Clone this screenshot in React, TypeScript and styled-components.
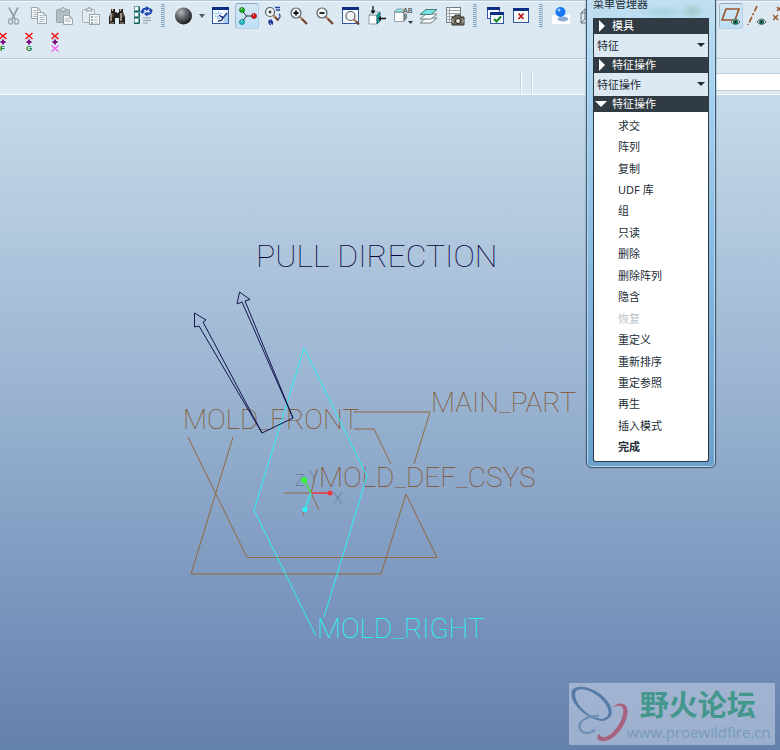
import React from "react";
import styled, { createGlobalStyle, css } from "styled-components";

const GlobalStyle = createGlobalStyle`
  * { box-sizing: border-box; }
  body {
    margin: 0;
    font-family: "Noto Sans", "Noto Sans CJK SC", sans-serif;
    font-size: 11px;
    color: #222c34;
  }
  button, select, input { font: inherit; color: inherit; }
`;

const Page = styled.div`
  position: relative;
  display: flex;
  flex-direction: column;
  min-height: 100vh;
  overflow: hidden;
`;

const Header = styled.header`
  background: #dce9f3;
  border-top: 1px solid #b4c9dc;
  border-bottom: 1px solid #f6fafd;
  overflow: hidden;
`;

const Toolbar = styled.div`
  display: flex;
  align-items: center;
  height: 29px;
  border-top: 1px solid #eff5fa;
`;

const FlagBar = styled.div`
  display: flex;
  align-items: center;
  height: 28px;
  margin-left: -10px;
  padding-bottom: 5px;
`;

const ToolButton = styled.button<{ $active?: boolean }>`
  display: flex;
  flex: none;
  align-items: center;
  justify-content: center;
  width: 26px;
  height: 26px;
  padding: 0;
  border: 1px solid transparent;
  border-radius: 3px;
  background: none;
  background-clip: padding-box;
  ${(p) =>
    p.$active &&
    css`
      width: 24px;
      margin: 0 1px;
      border-color: #8fa9bf #b4d0e6 #b4d0e6 #9fb8cc;
      background: linear-gradient(#d3e6f4, #bfe0f7);
    `}
`;

const MoreButton = styled.button`
  display: flex;
  flex: none;
  width: 12px;
  height: 24px;
  align-items: center;
  justify-content: center;
  padding: 0;
  border: 0;
  background: none;
`;

const Divider = styled.div`
  flex: none;
  width: 14px;
  height: 24px;
  display: flex;
  justify-content: center;
  &::before {
    content: "";
    width: 3px;
    background: repeating-linear-gradient(#7d9fbd 0 1px, #dce9f3 1px 2px);
    border-right: 1px solid #b8cddd;
  }
`;

const DatumGroup = styled.div`
  display: flex;
  flex: none;
  margin-left: 118px;
`;

const InfoBar = styled.div`
  display: flex;
  justify-content: flex-end;
  align-items: flex-end;
  height: 36px;
  border-top: 1px solid #b4c9dc;
  box-shadow: inset 0 1px #f2f7fb;
`;

const Grip = styled.div`
  width: 11px;
  height: 22px;
  border-left: 1px solid #c5d4e0;
  box-shadow: inset 1px 0 #f8fbfd;
`;

const SearchBox = styled.input`
  width: 70px;
  height: 18px;
  margin: 0 0 3px 168px;
  padding: 0 4px;
  border: 1px solid #c0ced9;
  border-right: 0;
  background: #fff;
`;

const Viewport = styled.main`
  position: relative;
  flex: 1;
  background: linear-gradient(#c6dbea, #b1c8de 21%, #9cb6d2 43%, #7c98bf 75%, #6480ac);
`;

const Scene = styled.svg`
  display: block;
  width: 100%;
`;

const Label = styled.text<{ $large?: boolean }>`
  font-family: Roboto, "Liberation Sans", sans-serif;
  font-weight: 100;
  font-size: ${(p) => (p.$large ? 32 : 28)}px;
`;

const AxisLabel = styled.text`
  font-family: Roboto, "Liberation Sans", sans-serif;
  font-weight: 100;
  font-size: 16px;
  fill: #53617a;
`;

const Menu = styled.aside`
  position: absolute;
  top: -5px;
  right: 64px;
  width: 130px;
  padding: 0 6px 5px;
  border: 1px solid #3c566c;
  border-radius: 6px;
  background: linear-gradient(#c3e0f2, #a6d1ef 20%, #84b7df 60%, #6b9fcd);
  box-shadow: inset 0 0 0 1px #b9dcf2, 0 0 2px #6f8ba5;
`;

const MenuTitle = styled.h1`
  height: 22px;
  margin: 0;
  font-size: 11px;
  font-weight: 400;
  line-height: 15px;
  background: radial-gradient(ellipse 24px 7px at 70px 16px, #a5d3df, transparent),
    radial-gradient(ellipse 12px 8px at 99px 15px, #9fc9c6, transparent);
`;

const MenuBody = styled.div`
  border: 1px solid #2c3840;
  border-top: 0;
  border-radius: 0 0 3px 3px;
  background: #dce9f3;
`;

const SectionHead = styled.button`
  display: flex;
  align-items: center;
  gap: 5px;
  width: 100%;
  height: 16px;
  padding: 0 2px 0 1px;
  border: 0;
  background: #303b43;
  color: #fff;
  line-height: 16px;
  svg { flex: none; }
`;

const SelectWrap = styled.label`
  display: flex;
  align-items: center;
  height: 23px;
  padding: 0 3px 1px;
  select {
    flex: 1;
    min-width: 0;
    height: 22px;
    padding: 0;
    border: 0;
    appearance: none;
    background: none;
  }
`;

const CommandList = styled.ul`
  display: grid;
  grid-auto-rows: 1fr;
  height: 349px;
  margin: 0;
  padding: 2px 0 4px;
  border-radius: 0 0 3px 3px;
  background: #fff;
  list-style: none;
`;

const Command = styled.button<{ $strong?: boolean }>`
  display: block;
  width: 100%;
  height: 100%;
  padding: 0 0 0 24px;
  border: 0;
  background: none;
  text-align: left;
  font-weight: ${(p) => (p.$strong ? 700 : 400)};
  &:disabled { color: #b9c1c6; }
`;

const Watermark = styled.div`
  position: absolute;
  right: 5px;
  bottom: 5px;
  display: flex;
  width: 206px;
  height: 62px;
  background: rgba(218, 226, 240, 0.48);
`;

const Brand = styled.div`
  display: flex;
  flex-direction: column;
  align-items: flex-end;
  margin-left: -6px;
`;

const BrandName = styled.strong`
  padding-right: 15px;
  font-family: "Noto Sans CJK SC", sans-serif;
  font-size: 29px;
  font-weight: 700;
  line-height: 40px;
  color: #43978d;
`;

const BrandLink = styled.a`
  font-family: "Open Sans", sans-serif;
  font-size: 15px;
  line-height: 18px;
  color: #749bbb;
  text-decoration: none;
  white-space: nowrap;
`;

const Icon = ({ children }: { children: React.ReactNode }) => (
  <svg width="20" height="20" viewBox="0 0 20 20" fill="none" aria-hidden="true">
    {children}
  </svg>
);

const DocLines = ({ x, y }: { x: number; y: number }) => (
  <g>
    <path d={`M${x} ${y}h6l3 3v8h-9z`} fill="#f2f6f8" stroke="#9ba6ad" />
    <path d={`M${x + 6} ${y}v3h3M${x + 2} ${y + 3}h3M${x + 2} ${y + 5}h5M${x + 2} ${y + 7}h5M${x + 2} ${y + 9}h4`} stroke="#aeb7bc" />
  </g>
);

const CutIcon = () => (
  <Icon>
    <path d="M6 1.5 12 13M15 1.5 9 13" stroke="#929da4" strokeWidth="1.7" />
    <ellipse cx="7.5" cy="15.500" rx="2" ry="2.600" stroke="#9aa5ac" strokeWidth="1.400" />
    <ellipse cx="13.500" cy="15.500" rx="2" ry="2.600" stroke="#9aa5ac" strokeWidth="1.400" />
  </Icon>
);
const CopyIcon = () => (
  <Icon>
    <DocLines x={2.5} y={1.5} />
    <DocLines x={8.5} y={6.5} />
  </Icon>
);
const PasteIcon = () => (
  <Icon>
    <rect x="1.500" y="3.500" width="13" height="13" rx="1" fill="#b3bec5" stroke="#98a4ab" />
    <path d="M5 5V3h2l1-2 1.500 2H11v2z" fill="#e3e9ec" stroke="#939fa6" />
    <path d="M8.500 9.500h6l3 3v6h-9z" fill="#f3f6f8" stroke="#9ba6ad" />
    <path d="M10 13h4M10 15h6M14.500 9.500v3h3" stroke="#aeb7bc" />
  </Icon>
);
const PasteSpecialIcon = () => (
  <Icon>
    <rect x="1.500" y="3.500" width="12" height="13" rx="1" fill="#e4ebef" stroke="#a5b0b7" />
    <path d="M5 5V3h2l1-2 1.500 2H11v2z" fill="#e3e9ec" stroke="#939fa6" />
    <rect x="8.500" y="8.500" width="10" height="10" fill="#f7fafb" stroke="#9ba6ad" />
    <path d="M10 11h2M10 14h2M10 17h2" stroke="#7f8b93" strokeWidth="1.500" />
    <path d="M13 11h4M13 14h4M13 17h4" stroke="#b4bdc2" />
  </Icon>
);
const BinocularsIcon = () => (
  <Icon>
    <path d="M4 3h4v3h1l1 1h1l1-1V3h4v3l2 5v7h-6v-6H8v6H2v-7l2-5z" fill="#25211d" />
    <path d="M4 7v8M14 7v8M5.500 3v2M13.500 3v2" stroke="#c9c1b1" strokeWidth="1.400" />
    <path d="M6 7v4M16 7v4" stroke="#6f685c" />
    <path d="M3 17h4M13 17h4" stroke="#aba28f" />
  </Icon>
);
const RegenerateIcon = () => (
  <Icon>
    {[0.5, 6.5, 12.5].map((y) => (
      <g key={y}>
        <rect x="1.500" y={y} width="4" height="4" fill="#fff" stroke="#6aa3a2" />
        <path d={`M1 ${y + 5}h5.500v-5`} stroke="#155f63" />
      </g>
    ))}
    <path d="M9 6.500c0-3 2-4 5-4M18.500 3.500c0 3-2 4.500-4.500 4.500" stroke="#1b43ad" strokeWidth="2" />
    <path d="M13 0l4 2.500-4 2.500zM14.500 5.500v5L11 8zM7 5h5l-2.500 3zM15.500 5h4l-2-3z" fill="#1b43ad" />
    <path d="M10 12h8M10 14.500h8M10 17h5" stroke="#8f9ca5" />
  </Icon>
);
const SphereIcon = () => (
  <Icon>
    <defs>
      <radialGradient id="ball" cx=".35" cy=".28" r=".75">
        <stop offset="0" stopColor="#b5b9bc" />
        <stop offset=".4" stopColor="#6c7175" />
        <stop offset="1" stopColor="#15181b" />
      </radialGradient>
    </defs>
    <circle cx="10.500" cy="10" r="8.500" fill="url(#ball)" />
  </Icon>
);

const WindowFrame = ({ x = 1.5, y = 1.5, w = 16, h = 16 }) => (
  <g>
    <rect x={x} y={y} width={w} height={h} fill="#f5f9fe" stroke="#3157a5" />
    <path d={`M${x - 0.5} ${y + 1}h${w + 1}`} stroke="#0c2f85" strokeWidth="3" />
  </g>
);
const RepaintIcon = () => (
  <Icon>
    <WindowFrame />
    <path d="M12 17h5V5l-3 3z" fill="#a8cdf0" />
    <path d="M3 7l4 1M7 6l4 2M4 10l5 1M6 12l3 1" stroke="#49a3dc" strokeDasharray="1.500 1" />
    <path d="M7 15c5 0 5-2 4-5M8 9l4 3 4-5" stroke="#19357a" strokeWidth="1.300" />
  </Icon>
);
const SpinCenterIcon = () => (
  <Icon>
    <path d="M5 4.500 9.500 10 5 16M9.500 10H17" stroke="#2b3339" />
    <circle cx="5" cy="4" r="2.500" fill="#16b321" stroke="#086414" strokeWidth=".7" />
    <circle cx="5" cy="16" r="2.500" fill="#1fc3c9" stroke="#0a6a77" strokeWidth=".7" />
    <circle cx="17" cy="10" r="2.500" fill="#e11414" stroke="#8d0707" strokeWidth=".7" />
    <path d="M4 3h1M4 15h1M16 9h1" stroke="#fff" />
  </Icon>
);

const Lens = ({ cx = 7, cy = 7, r = 5, len = 6, children }: { cx?: number; cy?: number; r?: number; len?: number; children?: React.ReactNode }) => (
  <g>
    <path d={`M${cx + r - 1} ${cy + r - 1}L${cx + r + len} ${cy + r + len}`} stroke="#70432c" strokeWidth="2.200" />
    <path d={`M${cx + r - 1} ${cy + r - 1}l2 2`} stroke="#d49b70" strokeWidth="1.500" />
    <circle cx={cx} cy={cy} r={r} fill="#eff4f7" stroke="#596168" strokeWidth="1.200" />
    {children}
  </g>
);
const OrientModeIcon = () => (
  <Icon>
    <path d="M12 1.500h5M13 4h4M16 8c2 2 1 4-1 5M9 14c-4 0-4 3-1 5" stroke="#29439d" strokeWidth="1.300" />
    <path d="M5 15h5v4z" fill="#1d2c90" />
    <Lens cx={7} cy={6} r={4.5} len={4}>
      <path d="M5.500 6h3M7 4.500v3" stroke="#111" strokeWidth="1.200" />
    </Lens>
  </Icon>
);
const ZoomInIcon = () => (
  <Icon>
    <Lens><path d="M4.500 7h5M7 4.500v5" stroke="#111" strokeWidth="1.800" /></Lens>
  </Icon>
);
const ZoomOutIcon = () => (
  <Icon>
    <Lens><path d="M4.500 7h5" stroke="#111" strokeWidth="1.800" /></Lens>
  </Icon>
);
const RefitIcon = () => (
  <Icon>
    <WindowFrame />
    <Lens cx={9.5} cy={10} r={4.5} len={4} />
  </Icon>
);
const ReorientIcon = () => (
  <Icon>
    <path d="M2 9h8v9H2z" fill="#fff" stroke="#98a2a8" />
    <path d="M2 9l3-3h8l-3 3z" fill="#d0f1f0" stroke="#98a2a8" />
    <path d="M10 9l3-3v9l-3 3z" fill="#1aa3a2" stroke="#176d70" />
    <path d="M6 0v7M19 12.500h-6" stroke="#111" strokeWidth="1.300" />
    <path d="M3.500 4.500h5L6 8zM14 10v5l-3-2.500z" fill="#111" />
  </Icon>
);
const SavedViewsIcon = () => (
  <Icon>
    <path d="M1.500 6.500h9v9h-9z" fill="#fbfdfd" stroke="#9ba5aa" />
    <path d="M1 6l3-3h6v3z" fill="#83eae7" stroke="#88a2a6" />
    <path d="M11 7l3 1v4l-3 4z" fill="#78898e" />
    <path d="M15 15h5l-2.500 3z" fill="#2f383e" />
    <text x="10" y="7" fontFamily="Liberation Mono" fontSize="8" fill="#333">AB</text>
  </Icon>
);
const LayersIcon = () => (
  <Icon>
    {[10, 6].map((y) => (
      <path key={y} d={`M1 ${y + 7}l6-5h11l-6 5z`} fill="#f8fbfb" stroke="#747f83" />
    ))}
    <path d="M1 8.500l6-5h11l-6 5z" fill="#75e6e4" stroke="#4b7477" />
  </Icon>
);
const ViewManagerIcon = () => (
  <Icon>
    <rect x="1.500" y="1.500" width="14" height="15" fill="#f8fafb" stroke="#737b80" />
    <path d="M4.500 1v16M1 4.500h14M1 7.500h14M1 10.500h14M1 13.500h14" stroke="#9aa3a8" />
    <path d="M7 11h3V9h5v2h4v8H7z" fill="#6d6a5e" stroke="#36352f" />
    <circle cx="13" cy="15" r="2.500" fill="#e8e8df" stroke="#23231f" />
    <path d="M8 13v4M18 13v4" stroke="#c3bfa8" />
  </Icon>
);
const ActivateIcon = () => (
  <Icon>
    <WindowFrame x={2.5} y={1.5} w={12} h={11} />
    <WindowFrame x={5.5} y={6.5} w={13} h={11} />
    <path d="M9 13l2.500 2.500L16 10.500" stroke="#16831d" strokeWidth="2" />
  </Icon>
);
const CloseWindowIcon = () => (
  <Icon>
    <WindowFrame x={2.5} y={2.5} w={15} h={14} />
    <path d="M7.500 7.500l5 5.500M12.500 7.500l-5 5.500" stroke="#bd1717" strokeWidth="1.800" />
  </Icon>
);
const RealismIcon = () => (
  <Icon>
    <path d="M1 9h18v9H1z" fill="#fff" />
    <ellipse cx="12" cy="13" rx="5.500" ry="2.500" fill="#88acd6" />
    <circle cx="9.500" cy="6" r="5" fill="#1877f2" />
    <circle cx="8" cy="4" r="1.500" fill="#a9d3ff" />
  </Icon>
);
const WireframeIcon = () => (
  <Icon>
    <path d="M4 7h9v10H4zM4 7l4-4h9l-4 4M17 3v10l-4 4M8 3v10l-4 4M8 13h9" stroke="#697278" />
  </Icon>
);

const Eye = () => (
  <g>
    <path d="M10 16c3-4 6-4 9 0-3 3-6 3-9 0z" fill="#dfe5df" stroke="#5c5c55" />
    <circle cx="14.500" cy="16" r="2.500" fill="#12705f" />
    <circle cx="14.500" cy="16" r="1" fill="#0b1d1b" />
  </g>
);
const PlaneDisplayIcon = () => (
  <Icon>
    <path d="M5 3h13l-4 11H1z" stroke="#9b5a2c" strokeWidth="1.700" />
    <Eye />
  </Icon>
);
const AxisDisplayIcon = () => (
  <Icon>
    <path d="M10 0L1 19" stroke="#9b5a2c" strokeWidth="1.700" strokeDasharray="6 2 2 2" />
    <Eye />
  </Icon>
);
const PointDisplayIcon = () => (
  <Icon>
    <path d="M4 1l4 4M8 1L4 5M0 9l5 5M5 9l-5 5" stroke="#9b5a2c" strokeWidth="1.500" />
  </Icon>
);

const FlagIcon = ({ sign }: { sign: "F" | "G" | "X" }) => (
  <Icon>
    <path d="M6.500 1l7 6M13.500 1l-7 6" stroke="#ef1414" strokeWidth="1.600" />
    <path d="M10 7.500v5M7.500 10h5" stroke="#7c0b88" strokeWidth="2" />
    {sign === "X" ? (
      <path d="M6.500 13.500l7 6M13.500 13.500l-7 6" stroke="#ef5cf2" strokeWidth="1.200" />
    ) : (
      <text x="7" y="19" fontFamily="Liberation Sans" fontSize="8" fontWeight="700" fill="#118324">{sign}</text>
    )}
  </Icon>
);

const Caret = () => (
  <svg width="8" height="4" viewBox="0 0 8 4" aria-hidden="true">
    <path d="M0 0h8L4 4z" fill="#1e2c35" />
  </svg>
);

type Tool = [string, React.ComponentType];

const editTools: Tool[] = [
  ["剪切", CutIcon],
  ["复制", CopyIcon],
  ["粘贴", PasteIcon],
  ["选择性粘贴", PasteSpecialIcon],
  ["查找", BinocularsIcon],
  ["再生管理器", RegenerateIcon],
];
const viewTools: Tool[] = [
  ["重画", RepaintIcon],
  ["旋转中心", SpinCenterIcon],
  ["定向模式", OrientModeIcon],
  ["放大", ZoomInIcon],
  ["缩小", ZoomOutIcon],
  ["重新调整", RefitIcon],
  ["重定向", ReorientIcon],
  ["已保存视图", SavedViewsIcon],
  ["层", LayersIcon],
  ["视图管理器", ViewManagerIcon],
];
const windowTools: Tool[] = [
  ["激活窗口", ActivateIcon],
  ["关闭窗口", CloseWindowIcon],
];
const renderTools: Tool[] = [
  ["增强的真实感", RealismIcon],
  ["线框", WireframeIcon],
];
const datumTools: Tool[] = [
  ["平面显示", PlaneDisplayIcon],
  ["轴显示", AxisDisplayIcon],
  ["点显示", PointDisplayIcon],
];
const activeTools = ["旋转中心", "平面显示"];

const Tools = ({ items }: { items: Tool[] }) => (
  <>
    {items.map(([name, Glyph]) => (
      <ToolButton key={name} aria-label={name} $active={activeTools.includes(name)}>
        <Glyph />
      </ToolButton>
    ))}
  </>
);

const commands = [
  "求交", "阵列", "复制", "UDF 库", "组", "只读", "删除", "删除阵列",
  "隐含", "恢复", "重定义", "重新排序", "重定参照", "再生", "插入模式", "完成",
];

const Section = ({ title, open }: { title: string; open?: boolean }) => (
  <SectionHead aria-expanded={!!open}>
    <svg width="12" height="12" viewBox="0 0 12 12" aria-hidden="true">
      <path d={open ? "M0 3h12L6 9z" : "M4 0l6 6-6 6z"} fill="#fff" />
    </svg>
    {title}
  </SectionHead>
);

const Choice = ({ value }: { value: string }) => (
  <SelectWrap>
    <select aria-label={value} defaultValue={value}>
      <option>{value}</option>
    </select>
    <Caret />
  </SelectWrap>
);

const BROWN = "#91683f";
const BROWN_TEXT = "#82501f";
const NAVY = "#15154f";
const NAVY_TEXT = "#04043c";
const CYAN = "#2ff0f5";
const CYAN_TEXT = "#1cffff";

export default function App() {
  return (
    <Page>
      <GlobalStyle />
      <Header>
        <Toolbar role="toolbar">
          <Tools items={editTools} />
          <Divider />
          <ToolButton aria-label="外观库"><SphereIcon /></ToolButton>
          <MoreButton aria-label="更多外观">
            <svg width="6" height="4" viewBox="0 0 6 4" aria-hidden="true">
              <path d="M0 0h6L3 4z" fill="#4b5a66" />
            </svg>
          </MoreButton>
          <Tools items={viewTools} />
          <Divider />
          <Tools items={windowTools} />
          <Divider />
          <Tools items={renderTools} />
          <DatumGroup>
            <Tools items={datumTools} />
          </DatumGroup>
        </Toolbar>
        <FlagBar role="toolbar">
          <ToolButton aria-label="F"><FlagIcon sign="F" /></ToolButton>
          <ToolButton aria-label="G"><FlagIcon sign="G" /></ToolButton>
          <ToolButton aria-label="X"><FlagIcon sign="X" /></ToolButton>
        </FlagBar>
        <InfoBar>
          <Grip />
          <Grip />
          <SearchBox aria-label="过滤器" />
        </InfoBar>
      </Header>

      <Viewport>
        <Scene viewBox="0 95 780 655" fill="none">
          <g stroke={BROWN}>
            <path d="M354 412H430L414 464M354 429H374L391 464" />
            <path d="M188 437L247 557.500H437L406 494L381 574H191L233 437" />
            <path d="M284 493H311L319 510M311 493L317 469M311 493L303 515" />
          </g>
          <g fill={BROWN_TEXT}>
            <Label x="183" y="429">MOLD_FRONT</Label>
            <Label x="431" y="412">MAIN_PART</Label>
            <Label x="319" y="487">MOLD_DEF_CSYS</Label>
          </g>
          <path d="M324 617L367 476L304 348L254 510L316 636" stroke={CYAN} />
          <Label x="317" y="638" fill={CYAN_TEXT}>MOLD_RIGHT</Label>
          <g stroke={NAVY}>
            <path d="M262 433L199 326L194.500 327V313L206 320L203 322L262 433L293 418" />
            <path d="M293 418L242 302L237 304L239.500 292L250 299.500L245 301L293 418" />
          </g>
          <Label $large x="256" y="267" fill={NAVY_TEXT}>PULL DIRECTION</Label>
          <AxisLabel x="295" y="486">Z</AxisLabel>
          <AxisLabel x="309" y="482">Y</AxisLabel>
          <AxisLabel x="333" y="504">X</AxisLabel>
          <path d="M311 493H330" stroke="#f5333d" strokeWidth="1.500" />
          <path d="M311 493L304 480" stroke="#35e835" strokeWidth="1.500" />
          <path d="M311 493L305 509" stroke={CYAN} strokeWidth="1.500" />
          <circle cx="330" cy="493" r="2.500" fill="#f5333d" />
          <circle cx="304" cy="480" r="3" fill="#35f435" />
          <circle cx="305" cy="509.500" r="2.500" fill="#2cf7fa" />
        </Scene>

        <Watermark>
          <svg width="64" height="62" viewBox="0 0 64 62" fill="none" aria-hidden="true">
            <path fillRule="evenodd" fill="#557ba8" d="M4 6C12 0 31 7 39 19C46 29 43 36 34 38C22 37 7 27 3 15C2 11 2 8 4 6zM7 8C3 16 15 34 33 36C42 34 41 27 35 19C27 9 13 3 7 8z" />
            <path fillRule="evenodd" fill="#a8617f" d="M43 25C51 17 61 20 58 33C55 46 43 60 32 58C27 57 28 53 30 51C35 60 48 48 53 35C57 24 52 20 43 25z" />
            <path d="M30 33C18 32 8 39 11 46C13 51 21 51 26 47" stroke="#7293b8" strokeWidth="2.500" />
          </svg>
          <Brand>
            <BrandName>野火论坛</BrandName>
            <BrandLink href="#">www.proewildfire.cn</BrandLink>
          </Brand>
        </Watermark>
      </Viewport>

      <Menu>
        <MenuTitle>菜单管理器</MenuTitle>
        <MenuBody>
          <Section title="模具" />
          <Choice value="特征" />
          <Section title="特征操作" />
          <Choice value="特征操作" />
          <Section title="特征操作" open />
          <CommandList>
            {commands.map((name) => (
              <li key={name}>
                <Command disabled={name === "恢复"} $strong={name === "完成"}>{name}</Command>
              </li>
            ))}
          </CommandList>
        </MenuBody>
      </Menu>
    </Page>
  );
}
